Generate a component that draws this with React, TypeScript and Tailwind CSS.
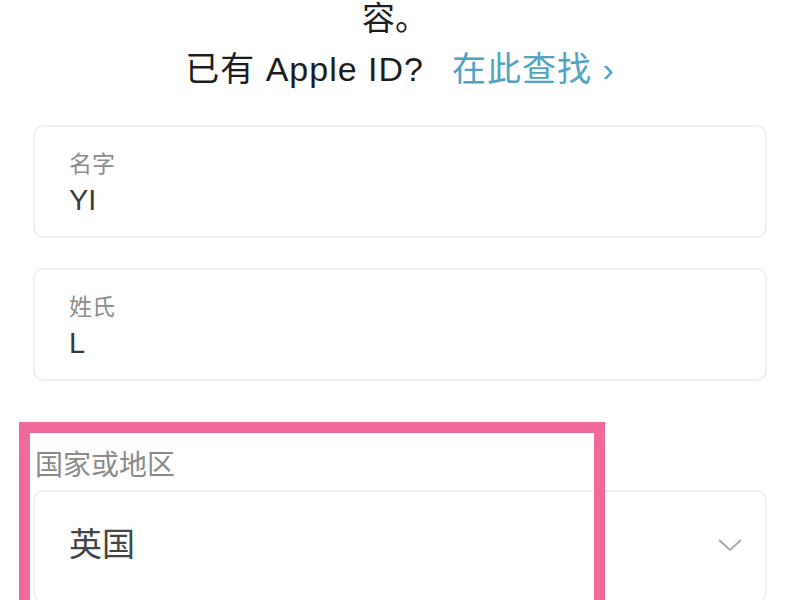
import React from 'react';

const font = { fontFamily: '"Liberation Sans", "Noto Sans CJK SC", sans-serif' };

const Field: React.FC<{ label: string; value: string }> = ({ label, value }) => (
  <div className="h-[113px] rounded-[10px] border-2 border-[#efefef] bg-white pl-[34px] pt-[21px]">
    <div className="text-[23px] leading-[32px] text-[#8c8c8c]">{label}</div>
    <div className="mt-[2px] text-[29px] leading-[36px] text-[#3a3a3a]">{value}</div>
  </div>
);

export default function App() {
  return (
    <div className="relative h-[600px] w-[800px] overflow-hidden bg-white" style={font}>
      <div className="-mt-[6px] text-center text-[33px] leading-[50px] text-[#1d1d1f]">
        <div className="pr-[10px]">容。</div>
        <div className="text-[34px] tracking-[1px]">
          已有 Apple ID?
          <span className="ml-[28px] text-[#52a2c4]">在此查找 ›</span>
        </div>
      </div>

      <div className="mt-[31px] flex flex-col gap-[30px] px-[33px]">
        <Field label="名字" value="YI" />
        <Field label="姓氏" value="L" />
      </div>

      <div className="mt-[66px] px-[33px]">
        <div className="pl-[2px] text-[28px] leading-[38px] text-[#8a8a8a]">国家或地区</div>
        <div className="mt-[5px] flex h-[113px] items-center justify-between rounded-[10px] border-2 border-[#efefef] bg-white pb-[4px] pl-[34px] pr-[22px]">
          <span className="text-[33px] text-[#444]">英国</span>
          <svg width="26" height="14" viewBox="0 0 26 14" fill="none" stroke="#a9a9a9" strokeWidth="2">
            <path d="M2 2 L13 12 L24 2" />
          </svg>
        </div>
      </div>

      <div className="absolute left-[19px] top-[422px] h-[240px] w-[586px] border-[11px] border-[#ef6a9b]" />
    </div>
  );
}
